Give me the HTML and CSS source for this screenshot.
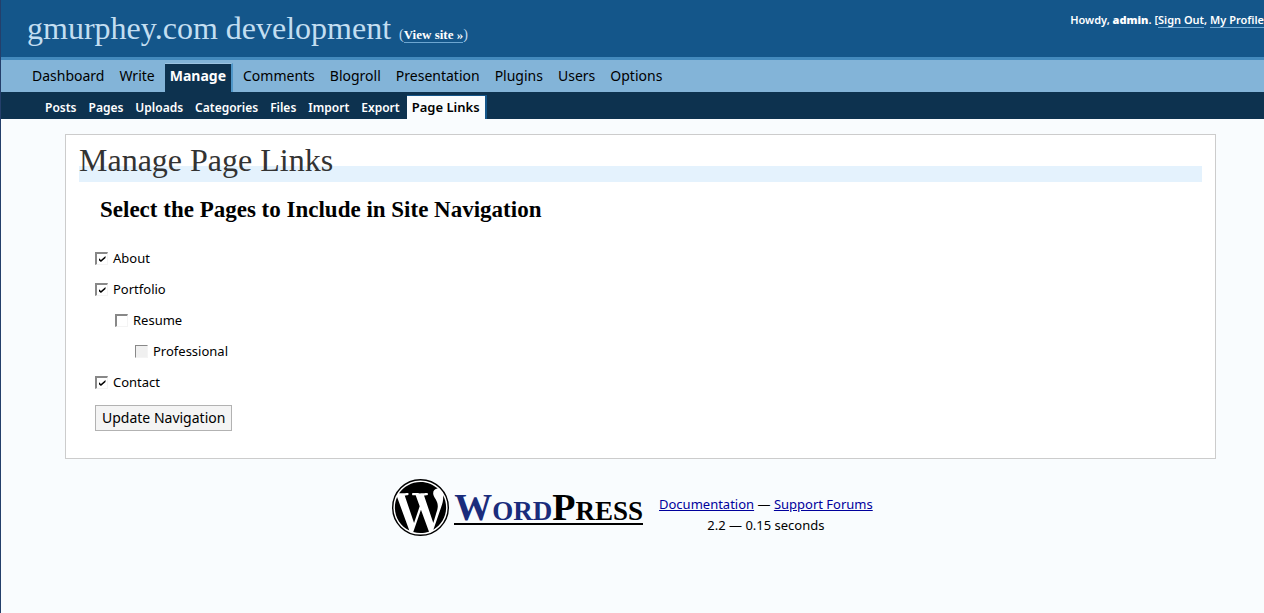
FILE: index.html
```html
<!DOCTYPE html>
<html lang="en">
<head>
<meta charset="utf-8">
<title>Manage Page Links</title>
<link rel="stylesheet" href="styles.css">
</head>
<body>
<header class="masthead">
  <h1 class="site-title">gmurphey.com development <span class="view-site">(<a href="#">View site »</a>)</span></h1>
  <p class="user-info">Howdy, <strong>admin</strong>. [<a href="#">Sign Out</a>, <a href="#">My Profile</a></p>
</header>
<nav class="menu" aria-label="Main">
  <a href="#">Dashboard</a>
  <a href="#">Write</a>
  <a href="#" class="current">Manage</a>
  <a href="#">Comments</a>
  <a href="#">Blogroll</a>
  <a href="#">Presentation</a>
  <a href="#">Plugins</a>
  <a href="#">Users</a>
  <a href="#">Options</a>
</nav>
<nav class="submenu" aria-label="Manage">
  <a href="#">Posts</a>
  <a href="#">Pages</a>
  <a href="#">Uploads</a>
  <a href="#">Categories</a>
  <a href="#">Files</a>
  <a href="#">Import</a>
  <a href="#">Export</a>
  <a href="#" class="current">Page Links</a>
</nav>
<main class="panel">
  <h2 class="panel-title">Manage Page Links</h2>
  <form class="links-form">
    <h3 class="form-title">Select the Pages to Include in Site Navigation</h3>
    <ul class="pages">
      <li><label><input type="checkbox" checked>About</label></li>
      <li><label><input type="checkbox" checked>Portfolio</label>
        <ul class="pages">
          <li><label><input type="checkbox">Resume</label>
            <ul class="pages">
              <li><label><input type="checkbox" disabled>Professional</label></li>
            </ul>
          </li>
        </ul>
      </li>
      <li><label><input type="checkbox" checked>Contact</label></li>
    </ul>
    <button type="button" class="submit">Update Navigation</button>
  </form>
</main>
<footer class="footer">
  <a href="#" class="logo">
    <svg class="logo-mark" viewBox="0 0 24 24" aria-hidden="true">
      <circle cx="12" cy="12" r="11.7" fill="#fff" stroke="#000" stroke-width=".6"/>
      <path d="M21.469 6.825c.84 1.537 1.318 3.3 1.318 5.175 0 3.979-2.156 7.456-5.363 9.325l3.295-9.527c.615-1.54.82-2.771.82-3.864 0-.405-.026-.78-.07-1.109m-7.981.105c.647-.03 1.232-.105 1.232-.105.582-.075.514-.93-.067-.899 0 0-1.755.135-2.88.135-1.064 0-2.85-.15-2.85-.15-.585-.03-.661.855-.075.885 0 0 .54.061 1.125.09l1.68 4.605-2.37 7.08L5.354 6.9c.649-.03 1.234-.1 1.234-.1.585-.075.516-.93-.065-.896 0 0-1.746.138-2.874.138-.2 0-.438-.008-.69-.015C4.911 3.15 8.235 1.215 12 1.215c2.809 0 5.365 1.072 7.286 2.833-.046-.003-.091-.009-.141-.009-1.06 0-1.812.923-1.812 1.914 0 .89.513 1.643 1.06 2.531.411.72.89 1.643.89 2.977 0 .915-.354 1.994-.821 3.479l-1.075 3.585-3.9-11.61zM12 22.784c-1.059 0-2.081-.153-3.048-.437l3.237-9.406 3.315 9.087c.024.053.05.101.078.149-1.12.393-2.325.609-3.582.609M1.211 12c0-1.564.336-3.05.935-4.39L7.29 21.709C3.694 19.96 1.212 16.271 1.211 12"/>
    </svg>
    <span class="logo-text"><span class="logo-word">Word</span>Press</span>
  </a>
  <p class="footer-info"><a href="#">Documentation</a> — <a href="#">Support Forums</a><br>2.2 — 0.15 seconds</p>
</footer>
</body>
</html>
```
FILE: styles.css
```css
* { box-sizing: border-box; }

body {
  margin: 0;
  min-height: 100vh;
  border-left: 1px solid #243f6b;
  background: #f9fcfe;
  color: #000;
  font: 13px/21px "Noto Sans", "Open Sans", sans-serif;
  overflow-x: hidden;
}

h1, h2, h3, p, ul { margin: 0; padding: 0; }

.masthead {
  display: flex;
  justify-content: space-between;
  height: 60px;
  padding-left: 26px;
  border-bottom: 3px solid #448abd;
  background: #14568a;
}

.site-title {
  padding-top: 8px;
  color: #c3def1;
  font: 32px/40px "Liberation Serif", serif;
  white-space: nowrap;
}

.view-site { font-size: 14px; }

.view-site a {
  border-bottom: 1px solid #6da6d1;
  color: #fff;
  font-size: 13px;
  font-weight: 700;
  text-decoration: none;
}

.user-info {
  padding-top: 9px;
  color: #fff;
  font-size: 11px;
  font-weight: 600;
  white-space: nowrap;
}

.user-info a {
  border-bottom: 1px solid #6da6d1;
  color: #fff;
  text-decoration: none;
}

.menu {
  display: flex;
  align-items: flex-end;
  gap: 5px;
  height: 32px;
  padding-left: 26px;
  background: #83b4d8;
  font-size: 14px;
}

.menu a {
  padding: 2px 5px 6px;
  color: #000;
  text-decoration: none;
}

.menu .current {
  padding-top: 1px;
  border-top: 1px solid #9cc3e0;
  border-right: 2px solid #4f96c8;
  background: #0d324f;
  color: #fff;
  font-weight: 700;
}

.submenu {
  display: flex;
  align-items: flex-end;
  gap: 2px;
  height: 27px;
  padding-left: 39px;
  background: #0d324f;
  font-size: 12px;
  font-weight: 600;
}

.submenu a {
  padding: 1px 5px;
  color: #fff;
  text-decoration: none;
}

.submenu .current {
  border-top: 1px solid #14568a;
  border-right: 2px solid #14568a;
  background: #f9fcfe;
  color: #000;
  font-size: 13px;
}

.panel {
  margin: 15px 48px 0 64px;
  padding: 6px 13px 27px;
  border: 1px solid #ccc;
  background: #fff;
}

.panel-title {
  padding-bottom: 3px;
  background: linear-gradient(transparent 25px, #e4f2fd 25px);
  color: #333;
  font: 32px/38px "Liberation Serif", serif;
}

.links-form { padding: 15px 16px 0; }

.form-title {
  padding: 0 5px;
  font: 700 23px/26px "Liberation Serif", serif;
}

.pages { list-style: none; }

.pages .pages { padding-left: 20px; }

.links-form > .pages { padding-top: 20px; }

.pages label {
  display: flex;
  align-items: center;
  gap: 5px;
  height: 31px;
}

.pages input {
  appearance: none;
  display: grid;
  place-items: center;
  width: 13px;
  height: 13px;
  margin: 0;
  border: solid #f4f4f4;
  border-width: 2px 1px 1px 2px;
  border-top-color: #888;
  border-left-color: #888;
  background: #fff;
}

.pages input:checked::before {
  content: "";
  width: 7px;
  height: 6px;
  background: #000;
  clip-path: polygon(0 30%, 35% 65%, 100% 0, 100% 35%, 35% 100%, 0 65%);
}

.pages input:disabled {
  border-width: 1px;
  background: #f0f0f0;
}

.submit {
  margin-top: 7px;
  padding: 2px 6px;
  border: 1px solid #b2b2b2;
  background: #f4f4f4;
  color: #000;
  font: 14px/20px "Noto Sans", "Open Sans", sans-serif;
}

.footer {
  display: flex;
  justify-content: center;
  gap: 16px;
  padding-top: 20px;
}

.logo {
  display: flex;
  gap: 5px;
  color: #000;
  text-decoration: none;
}

.logo-mark {
  width: 57px;
  height: 57px;
}

.logo-text {
  align-self: center;
  border-bottom: 2px solid #000;
  font: small-caps 700 38px/32px "Liberation Serif", serif;
}

.logo-word { color: #1a2c7c; }

.footer-info {
  padding-top: 15px;
  text-align: center;
}

.footer-info a { color: #00009c; }
```
